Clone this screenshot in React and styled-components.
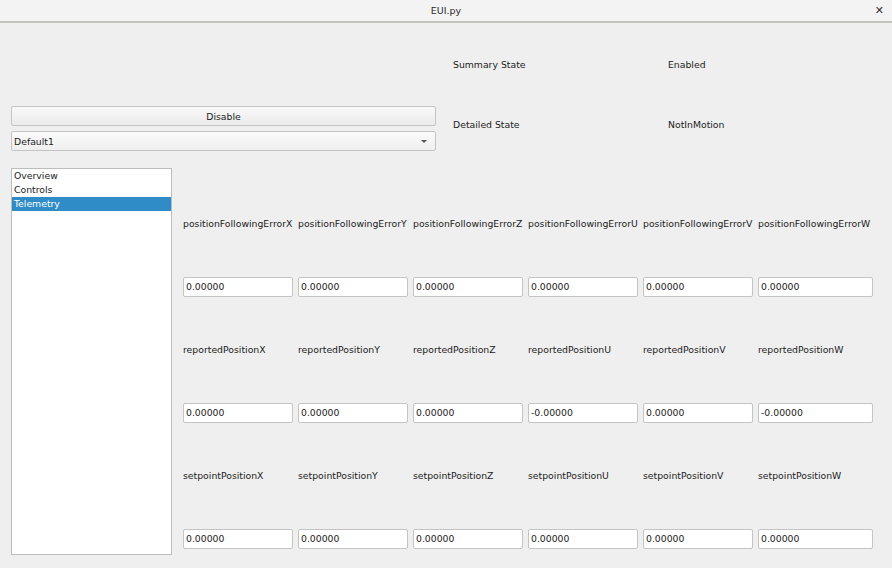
import React from "react";
import styled, { createGlobalStyle } from "styled-components";

const Global = createGlobalStyle`
  html, body {
    margin: 0;
    padding: 0;
    background: #efefef;
    overflow: hidden;
  }
  body {
    font-family: "DejaVu Sans", sans-serif;
    font-size: 9.3px;
    color: #1c1c1c;
  }
`;

const Window = styled.div`
  width: 892px;
  height: 568px;
  overflow: hidden;
  background: #efefef;
`;

const TitleBar = styled.header`
  height: 21px;
  border-bottom: 2px solid #c2c2bf;
  background: #f3f3f3;
  display: flex;
  align-items: center;
  justify-content: center;
  position: relative;
  font-size: 9.5px;
  color: #2a2a2a;
`;

const CloseButton = styled.span`
  position: absolute;
  right: 8px;
  top: 4px;
  font-size: 11px;
  font-weight: 700;
  color: #333;
`;

const Top = styled.section`
  display: flex;
  padding: 11px 0 0 11px;
  height: 120px;
`;

const ControlColumn = styled.div`
  width: 425px;
  display: flex;
  flex-direction: column;
  justify-content: flex-end;
  gap: 5px;
  padding-bottom: 3px;
`;

const PushButton = styled.div`
  height: 18px;
  border: 1px solid #c4c4c4;
  border-radius: 2px;
  background: linear-gradient(#f9f9f9, #ebebeb);
  display: flex;
  align-items: center;
  justify-content: center;
  padding-top: 1px;
  box-sizing: border-box;
  height: 20px;
`;

const Combo = styled.div`
  height: 18px;
  border: 1px solid #c4c4c4;
  border-radius: 2px;
  background: linear-gradient(#fafafa, #efefef);
  display: flex;
  align-items: center;
  justify-content: space-between;
  padding: 0 8px 0 2px;
`;

const Arrow = styled.span`
  width: 0;
  height: 0;
  border-left: 3px solid transparent;
  border-right: 3px solid transparent;
  border-top: 3px solid #555;
`;

const StateColumn = styled.div`
  margin-left: 17px;
  display: flex;
  flex-direction: column;
`;

const StateRow = styled.div`
  height: 60px;
  display: grid;
  grid-template-columns: 215px auto;
  align-items: center;
`;

const Bottom = styled.section`
  display: flex;
  align-items: flex-start;
  padding: 14px 0 0 11px;
  gap: 11px;
`;

const ListBox = styled.ul`
  list-style: none;
  margin: 0;
  padding: 0;
  width: 159px;
  height: 385px;
  border: 1px solid #bcbcbc;
  background: #fff;
`;

const ListItem = styled.li`
  height: 14px;
  line-height: 14px;
  padding-left: 2px;
  background: ${p => (p.selected ? "#308cc6" : "transparent")};
  color: ${p => (p.selected ? "#fff" : "#1c1c1c")};
`;

const Grid = styled.div`
  display: grid;
  grid-template-columns: repeat(5, 110px) 115px;
  grid-auto-rows: 63px;
  column-gap: 5px;
  align-items: center;
  padding-top: 24px;
`;

const Label = styled.div`
  white-space: nowrap;
`;

const Field = styled.div`
  height: 18px;
  border: 1px solid #c4c4c4;
  border-radius: 2px;
  background: #fff;
  display: flex;
  align-items: center;
  padding-left: 2px;
`;

const telemetry = [
  {
    names: ["positionFollowingErrorX", "positionFollowingErrorY", "positionFollowingErrorZ", "positionFollowingErrorU", "positionFollowingErrorV", "positionFollowingErrorW"],
    values: ["0.00000", "0.00000", "0.00000", "0.00000", "0.00000", "0.00000"],
  },
  {
    names: ["reportedPositionX", "reportedPositionY", "reportedPositionZ", "reportedPositionU", "reportedPositionV", "reportedPositionW"],
    values: ["0.00000", "0.00000", "0.00000", "-0.00000", "0.00000", "-0.00000"],
  },
  {
    names: ["setpointPositionX", "setpointPositionY", "setpointPositionZ", "setpointPositionU", "setpointPositionV", "setpointPositionW"],
    values: ["0.00000", "0.00000", "0.00000", "0.00000", "0.00000", "0.00000"],
  },
];

export default function App() {
  return (
    <Window>
      <Global />
      <TitleBar>
        EUI.py
        <CloseButton>✕</CloseButton>
      </TitleBar>
      <Top>
        <ControlColumn>
          <PushButton>Disable</PushButton>
          <Combo>
            Default1
            <Arrow />
          </Combo>
        </ControlColumn>
        <StateColumn>
          <StateRow>
            <span>Summary State</span>
            <span>Enabled</span>
          </StateRow>
          <StateRow>
            <span>Detailed State</span>
            <span>NotInMotion</span>
          </StateRow>
        </StateColumn>
      </Top>
      <Bottom>
        <ListBox>
          <ListItem>Overview</ListItem>
          <ListItem>Controls</ListItem>
          <ListItem selected>Telemetry</ListItem>
        </ListBox>
        <Grid>
          {telemetry.map((group, i) => (
            <React.Fragment key={i}>
              {group.names.map(n => (
                <Label key={n}>{n}</Label>
              ))}
              {group.values.map((v, j) => (
                <Field key={j}>{v}</Field>
              ))}
            </React.Fragment>
          ))}
        </Grid>
      </Bottom>
    </Window>
  );
}
